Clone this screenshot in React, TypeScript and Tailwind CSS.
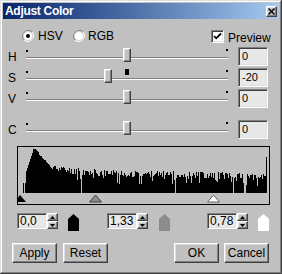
import React, { useMemo } from 'react';

// classic 3D bevels
const raised =
  'bg-[#c0c0c0] border border-t-white border-l-white border-r-[#404040] border-b-[#404040] shadow-[inset_-1px_-1px_#808080,inset_1px_1px_#dfdfdf]';
const sunken =
  'border border-t-[#808080] border-l-[#808080] border-r-white border-b-white shadow-[inset_1px_1px_#404040,inset_-1px_-1px_#dfdfdf]';

const Radio = ({ checked }: { checked?: boolean }) => (
  <svg width="12" height="12" viewBox="0 0 12 12" className="shrink-0">
    <path d="M10.2 1.8 A6 6 0 0 0 1.8 10.2" fill="none" stroke="#808080" strokeWidth="1" />
    <path d="M1.8 10.2 A6 6 0 0 0 10.2 1.8" fill="none" stroke="#ffffff" strokeWidth="1" />
    <circle cx="6" cy="6" r="4.5" fill="#ffffff" stroke="#d8d8d8" strokeWidth="1" />
    {checked && <circle cx="6" cy="6" r="2" fill="#000" />}
  </svg>
);

interface SliderProps {
  label: string;
  thumb: string;
  value: string;
  marker?: boolean;
  className?: string;
}

const SliderRow: React.FC<SliderProps> = ({ label, thumb, value, marker, className = '' }) => (
  <div className={`flex h-[19px] ${className}`}>
    <div className="w-[23px] pl-[5px] pt-[4px] leading-[13px] text-[12px]">{label}</div>
    <div className="relative w-[204px]">
      <span className="absolute left-0 top-[3px] w-[2px] h-[2px] bg-black" />
      <span className="absolute right-[2px] top-[2px] w-[2px] h-[2px] bg-black" />
      <div className="absolute left-0 right-[2px] top-[10px] h-[2px] border-t border-t-[#808080] border-b border-b-white" />
      {marker && <span className="absolute left-[99px] top-[1px] w-[4px] h-[6px] bg-black" />}
      <div className={`absolute top-[1px] w-[8px] h-[14px] rounded-t-[1px] ${raised} ${thumb}`} />
    </div>
    <div className={`ml-[8px] w-[30px] h-[19px] bg-[#e8e8e8] ${sunken} pl-[3px] pt-[2px] leading-[13px]`}>
      {value}
    </div>
  </div>
);

const Spin: React.FC<{ value: string; className?: string }> = ({ value, className = '' }) => (
  <div className={`flex ${className}`}>
    <div className={`w-[30px] h-[16px] bg-[#e8e8e8] ${sunken} pl-[2px] leading-[14px] text-[12px]`}>{value}</div>
    <div className="flex flex-col w-[11px] h-[16px]">
      <div className={`h-[8px] ${raised} flex items-center justify-center`}>
        <svg width="5" height="3" viewBox="0 0 5 3"><polygon points="0,3 2.5,0 5,3" fill="#000" /></svg>
      </div>
      <div className={`h-[8px] ${raised} flex items-center justify-center`}>
        <svg width="5" height="3" viewBox="0 0 5 3"><polygon points="0,0 5,0 2.5,3" fill="#000" /></svg>
      </div>
    </div>
  </div>
);

const Marker: React.FC<{ fill: string; className?: string }> = ({ fill, className = '' }) => (
  <svg width="11" height="17" viewBox="0 0 11 17" className={`mt-[1px] ${className}`}>
    <path d="M5.5 0 L11 5 L11 17 L0 17 L0 5 Z" fill={fill} />
  </svg>
);

const Histogram = () => {
  const bars = useMemo(() => {
    let s = 11;
    const rnd = () => {
      s = (s * 9301 + 49297) % 233280;
      return s / 233280;
    };
    const out: [number, number][] = [];
    const gaps = [63, 157, 215, 226, 227];
    for (let x = 0; x < 249; x++) {
      let h = 0;
      if (x === 5 || x === 7) h = 10;
      else if (x >= 8 && x < 15) h = 22 + (x - 8) * 3;
      else if (x >= 15) {
        const base = 21 - Math.max(0, x - 40) * 0.02;
        const noise = x < 30 ? 1.5 : 7;
        h = base + 23 * Math.exp(-Math.max(0, x - 18) / 12) + (rnd() - 0.5) * noise;
        if (x > 30 && rnd() < 0.14) h -= 3 + rnd() * 7;
      }
      if (gaps.includes(x)) h = 0;
      if (x === 248) h = 36;
      h = Math.min(44, Math.round(h));
      if (h > 0) out.push([x, h]);
    }
    return out;
  }, []);

  return (
    <div className="ml-[14px] mt-[7px] w-[253px] h-[59px] border border-black">
      <svg width="251" height="57" viewBox="0 0 251 57" shapeRendering="crispEdges">
        {bars.map(([x, h]) => (
          <rect key={x} x={x} y={46 - h} width={1} height={h} fill="#000" />
        ))}
        <g shapeRendering="auto">
          <polygon points="-3,55 2,48 8,55" fill="#000" />
          <polygon points="71.5,55 77.5,48 83.5,55" fill="#8c8c8c" stroke="#404040" strokeWidth="1" />
          <polygon points="189.5,55 195.5,48 201.5,55" fill="#fff" stroke="#606060" strokeWidth="1" />
        </g>
      </svg>
    </div>
  );
};

const Button: React.FC<{ label: string; className?: string }> = ({ label, className = '' }) => (
  <div className={`w-[45px] h-[20px] ${raised} flex items-center justify-center text-[12px] ${className}`}>{label}</div>
);

export default function App() {
  return (
    <div className="w-[282px] h-[274px] bg-[#c0c0c0] p-[3px] shadow-[inset_-1px_-1px_#404040,inset_1px_1px_#dfdfdf,inset_-2px_-2px_#808080,inset_2px_2px_#fff] font-['Liberation_Sans',Arial,sans-serif] text-[11px] text-black select-none">
      {/* Title bar */}
      <div className="h-[16px] flex items-center pl-[2px] pr-[2px] bg-gradient-to-r from-[#0a246a] to-[#a6caf0]">
        <span className="text-white font-bold text-[12px] tracking-[-0.3px] leading-none">Adjust Color</span>
        <div className={`ml-auto w-[11px] h-[11px] ${raised} flex items-center justify-center`}>
          <svg width="7" height="7" viewBox="0 0 7 7">
            <path d="M0.5 0.5 L6.5 6.5 M6.5 0.5 L0.5 6.5" stroke="#000" strokeWidth="1.4" />
          </svg>
        </div>
      </div>

      {/* Mode */}
      <div className="mt-[11px] h-[12px] flex items-center pl-[19px]">
        <div className="w-[51px] flex items-center gap-[4px]">
          <Radio checked />
          <span className="leading-none text-[12px]">HSV</span>
        </div>
        <div className="flex items-center gap-[3px]">
          <Radio />
          <span className="leading-none text-[12px]">RGB</span>
        </div>
        <div className="ml-auto w-[68px] flex items-center gap-[4px]">
          <div className={`w-[13px] h-[13px] bg-white ${sunken} flex items-center justify-center`}>
            <svg width="9" height="9" viewBox="0 0 9 9">
              <path d="M1 4 L3.2 6.3 L8 1.5" fill="none" stroke="#000" strokeWidth="1.8" />
            </svg>
          </div>
          <span className="leading-none text-[12px] mt-[3px]">Preview</span>
        </div>
      </div>

      {/* Sliders */}
      <SliderRow className="mt-[5px]" label="H" thumb="left-[97px]" value="0" />
      <SliderRow className="mt-[2px]" label="S" thumb="left-[78px]" value="-20" marker />
      <SliderRow className="mt-[2px]" label="V" thumb="left-[97px]" value="0" />
      <SliderRow className="mt-[12px]" label="C" thumb="left-[97px]" value="0" />

      <Histogram />

      {/* Levels */}
      <div className="mt-[8px] h-[18px] flex items-start">
        <Spin className="ml-[14px]" value="0,0" />
        <Marker className="ml-[10px]" fill="#000" />
        <Spin className="ml-[28px]" value="1,33" />
        <Marker className="ml-[11px]" fill="#8c8c8c" />
        <Spin className="ml-[37px]" value="0,78" />
        <Marker className="ml-[10px]" fill="#fff" />
      </div>

      {/* Buttons */}
      <div className="mt-[12px] flex">
        <Button className="ml-[9px]" label="Apply" />
        <Button className="ml-[6px]" label="Reset" />
        <Button className="ml-[66px]" label="OK" />
        <Button className="ml-[5px]" label="Cancel" />
      </div>
    </div>
  );
}
